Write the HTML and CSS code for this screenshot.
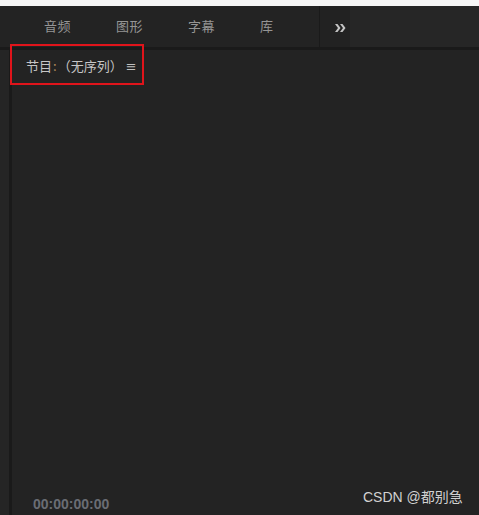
FILE: index.html
```html
<!DOCTYPE html>
<html lang="zh">
<head>
<meta charset="utf-8">
<title>节目</title>
<link rel="stylesheet" href="styles.css">
</head>
<body>
  <div class="topgap"></div>
  <div class="tabbar">
    <div class="tabs">
      <span class="tab">音频</span>
      <span class="tab">图形</span>
      <span class="tab">字幕</span>
      <span class="tab last">库</span>
    </div>
    <div class="more">
      <svg width="11" height="8" viewBox="0 0 11 8">
        <path d="M0 0 L2.5 0 L5.5 4 L2.5 8 L0 8 L3 4 Z" fill="#c4c4c4"/>
        <path d="M5 0 L7.5 0 L10.5 4 L7.5 8 L5 8 L8 4 Z" fill="#c4c4c4"/>
      </svg>
    </div>
    <div class="rest"></div>
  </div>
  <div class="divider"></div>
  <div class="main">
    <div class="leftstrip"></div>
    <div class="panel">
      <div class="panelhead">
        <span class="title">节目<span class="colon">:</span>（无序列）</span>
        <span class="menu">≡</span>
      </div>
      <div class="panelbody"></div>
      <div class="panelfoot">
        <span class="timecode">00:00:00:00</span>
      </div>
    </div>
  </div>
  <div class="redbox"></div>
  <div class="watermark">CSDN @都别急</div>
</body>
</html>
```

FILE: styles.css
```css
html, body {
  margin: 0;
  padding: 0;
}
body {
  width: 479px;
  height: 515px;
  overflow: hidden;
  background: #232323;
  font-family: "Noto Sans CJK SC", "Liberation Sans", sans-serif;
  position: relative;
}
.topgap {
  height: 6px;
  background: #f6f6f6;
}
.tabbar {
  height: 41px;
  display: flex;
  background: #232323;
}
.tabs {
  flex: 0 0 320px;
  box-sizing: border-box;
  padding-left: 44px;
  display: flex;
  align-items: center;
  border-right: 1px solid #1a1a1a;
}
.tab {
  flex: 0 0 72px;
  font-size: 13px;
  line-height: 16px;
  color: #959595;
  letter-spacing: 0.5px;
  margin-top: -1px;
}
.tab.last {
  flex: 0 0 auto;
}
.more {
  width: 30px;
  display: flex;
  align-items: center;
  padding-left: 15px;
  box-sizing: border-box;
  background: #222222;
}
.more svg {
  margin-top: 2px;
}
.rest {
  flex: 1;
  background: #262626;
}
.divider {
  height: 3px;
  background: #1a1a1a;
}
.main {
  display: flex;
  height: 465px;
}
.leftstrip {
  width: 9px;
  background: #252525;
  border-right: 3px solid #1a1a1a;
}
.panel {
  flex: 1;
  display: flex;
  flex-direction: column;
  background: #232323;
}
.panelhead {
  height: 30px;
  display: flex;
  align-items: center;
  padding-left: 14px;
  padding-top: 1px;
}
.title {
  font-size: 13px;
  line-height: 16px;
  color: #c6c6c6;
}
.colon {
  color: #b08a5a;
  margin: 0 1px;
}
.menu {
  font-size: 13px;
  color: #c0c0c0;
  margin-left: 3px;
  font-family: "DejaVu Sans", sans-serif;
}
.panelbody {
  flex: 1;
}
.panelfoot {
  height: 19px;
  padding-left: 21px;
  display: flex;
  align-items: flex-start;
}
.timecode {
  font-family: "Liberation Sans", Arial, sans-serif;
  font-weight: bold;
  font-size: 14px;
  line-height: 16px;
  color: #6a6d74;
}
.redbox {
  position: absolute;
  left: 10px;
  top: 44px;
  width: 130px;
  height: 37px;
  border: 2px solid #e0141b;
}
.watermark {
  position: absolute;
  left: 363px;
  top: 487px;
  font-family: "Liberation Sans", "Noto Sans CJK SC", sans-serif;
  font-size: 14px;
  line-height: 20px;
  color: #d2d2d2;
}
```
